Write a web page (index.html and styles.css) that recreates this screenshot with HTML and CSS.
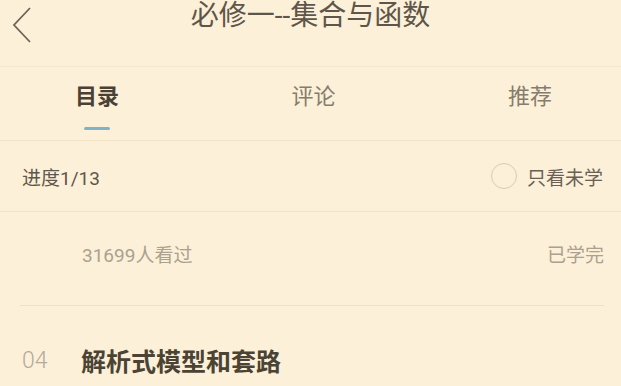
FILE: index.html
```html
<!DOCTYPE html>
<html lang="zh-CN">
<head>
    <meta charset="UTF-8">
    <meta name="viewport" content="width=device-width, initial-scale=1.0">
    <title>必修一--集合与函数</title>
    <link rel="stylesheet" href="styles.css">
</head>
<body>
    <header class="top-bar">
        <a class="back-btn" href="#">
            <svg width="22" height="38" viewBox="0 0 22 38">
                <polyline points="19,2 3,19 19,36" fill="none" stroke="#6d6457" stroke-width="1.8"/>
            </svg>
        </a>
        <h1 class="page-title">必修一--集合与函数</h1>
        <span></span>
    </header>

    <nav class="tabs">
        <div class="tab active">
            <span class="tab-label">目录</span>
            <span class="tab-line"></span>
        </div>
        <div class="tab">
            <span class="tab-label">评论</span>
            <span class="tab-line"></span>
        </div>
        <div class="tab">
            <span class="tab-label">推荐</span>
            <span class="tab-line"></span>
        </div>
    </nav>

    <div class="progress-row">
        <span class="progress">进度1/13</span>
        <label class="filter">
            <span class="radio"></span>
            只看未学
        </label>
    </div>

    <ul class="lesson-list">
        <li class="lesson">
            <div class="lesson-meta">
                <span>31699人看过</span>
                <span>已学完</span>
            </div>
        </li>
        <li class="lesson">
            <div class="lesson-head">
                <span class="lesson-no">04</span>
                <span class="lesson-title">解析式模型和套路</span>
            </div>
        </li>
    </ul>
</body>
</html>
```

FILE: styles.css
```css
body {
    margin: 0;
    background: #fdf0d9;
    font-family: Roboto, "Noto Sans CJK SC", sans-serif;
    color: #5e564a;
    overflow: hidden;
}
.top-bar {
    display: grid;
    grid-template-columns: 50px 1fr 50px;
    height: 66px;
    border-bottom: 1px solid #f5e7ce;
}
.back-btn {
    display: block;
    padding: 6px 0 0 11px;
}
.page-title {
    margin: 0;
    text-align: center;
    font-size: 28px;
    font-weight: normal;
    line-height: 31px;
    color: #5e564a;
}
.tabs {
    display: flex;
    justify-content: space-between;
    padding: 0 69px 0 75px;
    height: 73px;
    border-bottom: 1px solid #f1e2c8;
}
.tab {
    display: flex;
    flex-direction: column;
    align-items: center;
    padding-top: 15px;
}
.tab-label {
    font-size: 22px;
    line-height: 30px;
    color: #857c6e;
}
.tab-line {
    width: 26px;
    height: 3px;
    margin-top: 15px;
    border-radius: 2px;
}
.tab.active .tab-label {
    font-weight: bold;
    color: #4a4033;
}
.tab.active .tab-line {
    background: #7fb4c8;
}
.progress-row {
    display: flex;
    justify-content: space-between;
    align-items: center;
    height: 70px;
    padding: 0 18px 0 22px;
    border-bottom: 1px solid #f1e2c8;
    font-size: 19px;
}
.progress {
    color: #5f574b;
}
.filter {
    display: flex;
    align-items: center;
    gap: 10px;
    color: #6a6154;
}
.radio {
    width: 24px;
    height: 24px;
    border: 1.5px solid #d4ccbb;
    border-radius: 50%;
}
.lesson-list {
    list-style: none;
    margin: 0;
    padding: 0;
}
.lesson {
    margin: 0 17px 0 20px;
    border-bottom: 1px solid #efe1c7;
}
.lesson:last-child {
    border-bottom: none;
}
.lesson-meta {
    display: flex;
    justify-content: space-between;
    align-items: center;
    height: 83px;
    padding: 0 0 10px 62px;
    font-size: 19px;
    color: #aaa18f;
}
.lesson-head {
    display: flex;
    align-items: center;
    height: 108px;
}
.lesson-no {
    width: 59px;
    padding-left: 2px;
    font-size: 23px;
    font-weight: 300;
    color: #b3ab9a;
}
.lesson-title {
    font-size: 25px;
    font-weight: bold;
    color: #4b4334;
}
```
